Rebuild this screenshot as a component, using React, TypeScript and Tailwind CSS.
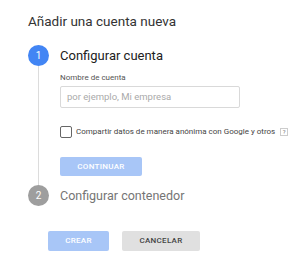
import React from "react";

// Paso del asistente: círculo numerado + título
const StepHeader = ({ n, title, active }: { n: number; title: string; active: boolean }) => (
  <div className="flex items-center">
    <div
      className={
        "w-[21px] h-[21px] rounded-full flex items-center justify-center text-white text-[10px] leading-none " +
        (active ? "bg-[#4285f4]" : "bg-[#9e9e9e]")
      }
    >
      {n}
    </div>
    <span
      className={
        "ml-[11px] leading-[20px] " + (active ? "text-[13px] text-[#212121]" : "text-[12.5px] text-[#757575]")
      }
    >
      {title}
    </span>
  </div>
);

export default function App() {
  return (
    <div className="w-[300px] h-[263px] bg-white overflow-hidden font-['Roboto',sans-serif]">
      <div className="pl-[28px] pt-[12px]">
        <h1 className="text-[13.5px] leading-[18px] text-[#333]">Añadir una cuenta nueva</h1>

        <div className="mt-[15px]">
          <StepHeader n={1} title="Configurar cuenta" active />
        </div>

        {/* contenido del paso 1, con la línea vertical del stepper */}
        <div className="ml-[10px] border-l border-[#dcdcdc] pl-[21px] pt-[7px] pb-[9px]">
          <div className="text-[8px] leading-[10px] text-[#555]">Nombre de cuenta</div>
          <div className="mt-[3px] w-[180px] h-[22px] border border-[#d9d9d9] rounded-[2px] flex items-center px-[6px]">
            <span className="text-[9.5px] text-[#aaa]">por ejemplo, Mi empresa</span>
          </div>

          <div className="mt-[18px] flex items-center">
            <div className="w-[12px] h-[12px] border-[1.5px] border-[#666] rounded-[2px]" />
            <span className="ml-[4px] text-[8px] text-[#444]">
              Compartir datos de manera anónima con Google y otros
            </span>
            <span className="ml-[5px] w-[8px] h-[8px] border border-[#ccc] text-[6px] leading-none text-[#777] flex items-center justify-center">
              ?
            </span>
          </div>

          <button className="mt-[19px] w-[82px] h-[19px] bg-[#a8c6f7] rounded-[2px] text-white text-[8px] font-medium tracking-[0.3px]">
            CONTINUAR
          </button>
        </div>

        <StepHeader n={2} title="Configurar contenedor" active={false} />

        <div className="mt-[25px] ml-[20px] flex gap-[13px]">
          <button className="w-[61px] h-[20px] bg-[#a8c6f7] rounded-[2px] text-white text-[8px] font-medium tracking-[0.3px]">
            CREAR
          </button>
          <button className="w-[78px] h-[20px] bg-[#e0e0e0] rounded-[2px] text-[#444] text-[8px] font-medium tracking-[0.3px]">
            CANCELAR
          </button>
        </div>
      </div>
    </div>
  );
}
